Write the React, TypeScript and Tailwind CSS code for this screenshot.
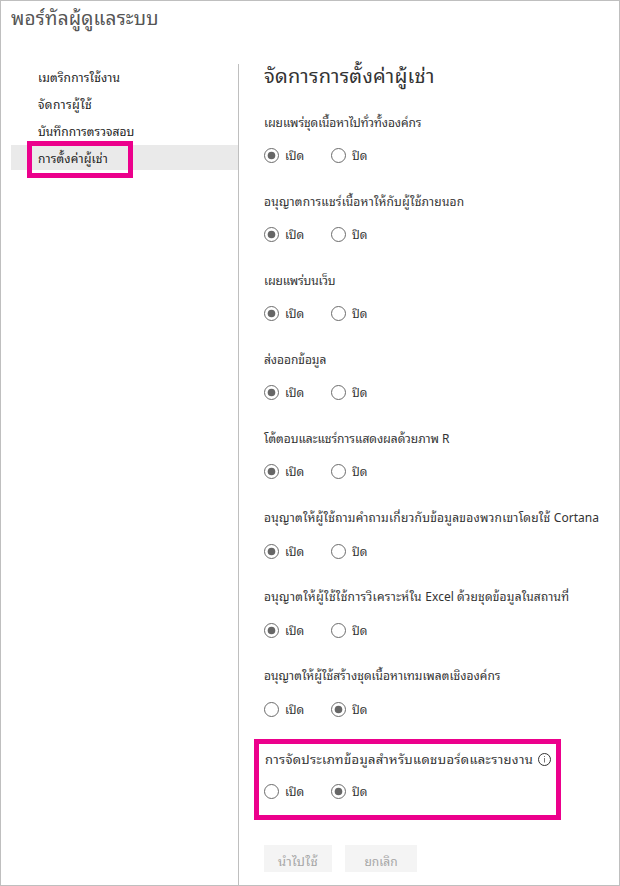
import React from 'react';

type Part = { text: string; tracking: string };
type Setting = { parts: Part[]; on: boolean; radioTop: string };

const navItems: Part[] = [
  { text: 'เมตริกการใช้งาน', tracking: 'tracking-[0.15px]' },
  { text: 'จัดการผู้ใช้', tracking: 'tracking-[0.4px]' },
  { text: 'บันทึกการตรวจสอบ', tracking: 'tracking-[0.05px]' },
  { text: 'การตั้งค่าผู้เช่า', tracking: 'tracking-[0.18px]' },
];

const settings: Setting[] = [
  { parts: [{ text: 'เผยแพร่ชุดเนื้อหาไปทั่วทั้งองค์กร', tracking: 'tracking-[-0.08px]' }], on: true, radioTop: 'mt-[18px]' },
  { parts: [{ text: 'อนุญาตการแชร์เนื้อหาให้กับผู้ใช้ภายนอก', tracking: 'tracking-[0.2px]' }], on: true, radioTop: 'mt-[18px]' },
  { parts: [{ text: 'เผยแพร่บนเว็บ', tracking: 'tracking-[-0.15px]' }], on: true, radioTop: 'mt-[18px]' },
  { parts: [{ text: 'ส่งออกข้อมูล', tracking: 'tracking-[-0.05px]' }], on: true, radioTop: 'mt-[18px]' },
  { parts: [{ text: 'โต้ตอบและแชร์การแสดงผลด้วยภาพ R', tracking: 'tracking-[-0.03px]' }], on: true, radioTop: 'mt-[18px]' },
  {
    parts: [
      { text: 'อนุญาตให้ผู้ใช้ถามคำถามเกี่ยวกับข้อมูลของพวกเขาโดยใช้ ', tracking: 'tracking-[0.24px]' },
      { text: 'Cortana', tracking: 'tracking-normal' },
    ],
    on: true,
    radioTop: 'mt-[19px]',
  },
  {
    parts: [
      { text: 'อนุญาตให้ผู้ใช้ใช้การวิเคราะห์ใน ', tracking: 'tracking-[0.31px]' },
      { text: 'Excel ', tracking: 'tracking-normal' },
      { text: 'ด้วยชุดข้อมูลในสถานที่', tracking: 'tracking-[0.2px]' },
    ],
    on: true,
    radioTop: 'mt-[19px]',
  },
  { parts: [{ text: 'อนุญาตให้ผู้ใช้สร้างชุดเนื้อหาเทมเพลตเชิงองค์กร', tracking: 'tracking-[0.04px]' }], on: false, radioTop: 'mt-[19px]' },
];

function Radio({ checked, label }: { checked: boolean; label: string }) {
  return (
    <label className="flex h-[15px] w-[67px] gap-1.5">
      <svg className="h-[15px] w-[15px] shrink-0" viewBox="0 0 15 15" fill="none">
        <circle cx="7.5" cy="7.5" r="7" stroke="#6b6b6b" />
        {checked && <circle cx="7.5" cy="7.5" r="3.8" fill="#666" />}
      </svg>
      <span className="text-xs leading-[13px]">{label}</span>
    </label>
  );
}

function OnOff({ on }: { on: boolean }) {
  return (
    <div className="flex h-[15px]">
      <Radio checked={on} label="เปิด" />
      <Radio checked={!on} label="ปิด" />
    </div>
  );
}

export default function App() {
  return (
    <div className="relative flex h-[886px] w-[620px] flex-col overflow-hidden whitespace-nowrap border border-[#bfbfbf] bg-white font-['Leelawadee_UI','Noto_Sans_Thai_Looped','Noto_Sans_Thai','Noto_Sans',sans-serif] text-[#333]">
      <h1 className="h-[63px] pl-2.5 pt-0.5 text-[19px] leading-7 tracking-[0.2px] text-[#555]">พอร์ทัลผู้ดูแลระบบ</h1>
      <div className="flex grow">
        <nav className="w-[238px] border-r border-[#bfbfbf] pl-2.5">
          {navItems.map((item, i) => (
            <div
              key={item.text}
              className={`mb-0.5 h-[25px] pl-[27px] text-xs leading-[26px] text-[#222] ${item.tracking} ${i === 3 ? 'bg-[#eaeaea]' : ''}`}
            >
              {item.text}
            </div>
          ))}
        </nav>
        <main className="w-[380px] pl-[25px]">
          <h2 className="h-[49px] text-xl leading-5 tracking-[0.25px]">จัดการการตั้งค่าผู้เช่า</h2>
          {settings.map((s) => (
            <section key={s.parts[0].text} className="h-[79px]">
              <h3 className="h-[17px] whitespace-pre text-xs leading-[17px]">
                {s.parts.map((p) => (
                  <span key={p.text} className={p.tracking}>
                    {p.text}
                  </span>
                ))}
              </h3>
              <div className={s.radioTop}>
                <OnOff on={s.on} />
              </div>
            </section>
          ))}
          <section className="h-[100px] pt-1.5">
            <h3 className="flex h-[17px] items-center pl-px text-[13px]">
              <span className="w-[273px] pb-[3px] leading-[19px] tracking-[0.32px]">การจัดประเภทข้อมูลสำหรับแดชบอร์ดและรายงาน</span>
              <svg className="h-[13px] w-[13px] shrink-0" viewBox="0 0 13 13" fill="none" stroke="#333">
                <circle cx="6.5" cy="6.5" r="6" />
                <path d="M6.5 5V9.5M6.5 3V4" stroke="#777" />
              </svg>
            </h3>
            <div className="mt-4">
              <OnOff on={false} />
            </div>
          </section>
          <div className="flex gap-[13px] text-xs text-[#a6a6a6]">
            <button className="h-[27px] w-[68px] bg-[#f4f4f4] pt-1 text-[13px] leading-[21px] tracking-[0.3px]">นำไปใช้</button>
            <button className="h-[27px] w-[72px] bg-[#f4f4f4] pt-1 leading-[21px]">ยกเลิก</button>
          </div>
        </main>
      </div>
      <div className="absolute left-[26px] top-[140px] h-[37px] w-[106px] border-[5px] border-[#ec008c]" />
      <div className="absolute left-[253px] top-[738px] h-[81px] w-[307px] border-[5px] border-[#ec008c]" />
    </div>
  );
}
